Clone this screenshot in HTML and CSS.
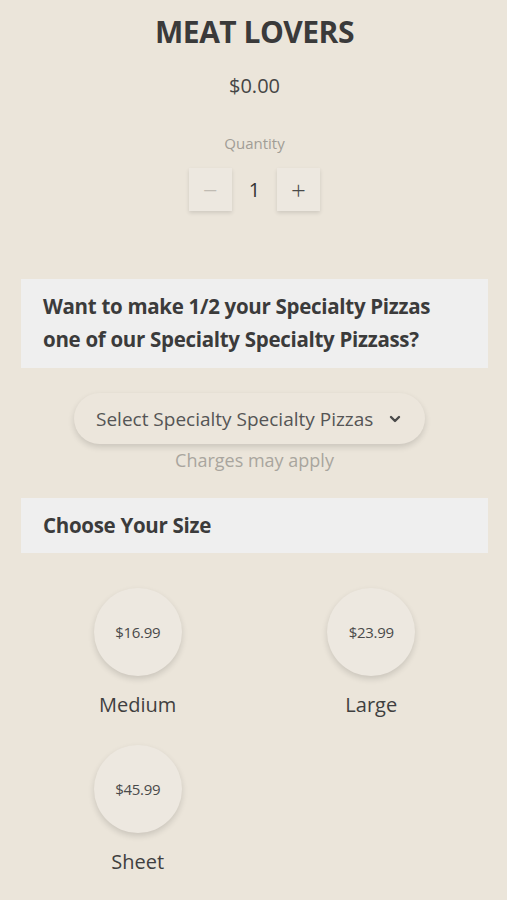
FILE: index.html
```html
<!DOCTYPE html>
<html>
<head>
<meta charset="utf-8">
<link rel="stylesheet" href="styles.css">
</head>
<body>
<div class="page">
  <h1 class="title">MEAT LOVERS</h1>
  <div class="price">$0.00</div>
  <div class="qty-label">Quantity</div>
  <div class="qty">
    <button class="qty-btn minus">&#8722;</button>
    <span class="qty-num">1</span>
    <button class="qty-btn plus">+</button>
  </div>

  <div class="panel panel-tall">Want to make 1/2 your Specialty Pizzas one of our Specialty Specialty Pizzass?</div>

  <div class="select-wrap">
    <div class="select">
      <span>Select Specialty Specialty Pizzas</span>
      <svg class="chev" width="12" height="8" viewBox="0 0 12 8"><path d="M2 2 L6 6 L10 2" fill="none" stroke="#4a4a4a" stroke-width="2.4" stroke-linecap="round" stroke-linejoin="round"/></svg>
    </div>
    <div class="charges">Charges may apply</div>
  </div>

  <div class="panel panel-short">Choose Your Size</div>

  <div class="sizes">
    <div class="size">
      <div class="circle">$16.99</div>
      <div class="size-name">Medium</div>
    </div>
    <div class="size">
      <div class="circle">$23.99</div>
      <div class="size-name">Large</div>
    </div>
    <div class="size">
      <div class="circle">$45.99</div>
      <div class="size-name">Sheet</div>
    </div>
  </div>
</div>
</body>
</html>
```

FILE: styles.css
```css
* { box-sizing: border-box; }
html, body {
  margin: 0;
  padding: 0;
  background: #ebe5da;
}
body {
  font-family: "Open Sans", "Noto Sans", sans-serif;
  color: #3d3d3d;
}
.page {
  width: 507px;
  height: 900px;
  overflow: hidden;
  padding: 0 19px 0 21px;
  display: flex;
  flex-direction: column;
  align-items: stretch;
}
.title {
  margin: 13px 0 0;
  text-align: center;
  font-size: 30px;
  font-weight: 700;
  line-height: 38px;
  letter-spacing: -0.5px;
  color: #3a3a3a;
}
.price {
  margin-top: 22px;
  text-align: center;
  font-size: 20px;
  line-height: 26px;
  color: #454545;
}
.qty-label {
  margin-top: 34px;
  text-align: center;
  font-size: 15px;
  line-height: 20px;
  color: #a19d96;
}
.qty {
  margin-top: 15px;
  display: flex;
  justify-content: center;
  align-items: center;
}
.qty-btn {
  width: 43px;
  height: 43px;
  border: none;
  background: #ede8e0;
  box-shadow: 0 2px 4px rgba(0,0,0,0.12);
  font-family: "Open Sans", sans-serif;
  font-size: 26px;
  font-weight: 300;
  line-height: 1;
  padding: 0;
  display: flex;
  align-items: center;
  justify-content: center;
}
.minus { color: #c0bbb3; }
.plus { color: #4a4a4a; }
.qty-num {
  width: 45px;
  text-align: center;
  font-size: 20px;
  color: #333;
}
.panel {
  background: #efefef;
  font-size: 20.5px;
  font-weight: 700;
  color: #3b3b3b;
  padding: 0 22px;
  letter-spacing: -0.3px;
}
.panel-tall {
  margin-top: 68px;
  height: 89px;
  padding-top: 11px;
  line-height: 33px;
}
.panel-short {
  height: 55px;
  line-height: 55px;
}
.select-wrap {
  display: flex;
  flex-direction: column;
  align-items: center;
  padding-top: 25px;
  height: 130px;
}
.select {
  width: 351px;
  height: 51px;
  margin-right: 10px;
  border-radius: 26px;
  background: #ece6dc;
  box-shadow: 0 3px 6px rgba(0,0,0,0.14);
  display: flex;
  align-items: center;
  justify-content: space-between;
  padding: 0 24px 0 22px;
  font-size: 19px;
  color: #555;
}
.chev { margin-top: 1px; }
.charges {
  margin-top: 4px;
  font-size: 18px;
  line-height: 24px;
  color: #a9a59e;
}
.sizes {
  display: grid;
  grid-template-columns: 1fr 1fr;
  row-gap: 27px;
  padding-top: 35px;
}
.size {
  display: flex;
  flex-direction: column;
  align-items: center;
}
.circle {
  width: 88px;
  height: 88px;
  border-radius: 50%;
  background: #ede8e0;
  box-shadow: 0 3px 6px rgba(0,0,0,0.14);
  display: flex;
  align-items: center;
  justify-content: center;
  font-size: 15px;
  color: #4a4a4a;
  letter-spacing: -0.3px;
}
.size-name {
  margin-top: 16px;
  font-size: 20px;
  line-height: 26px;
  color: #3f3f3f;
}
```
